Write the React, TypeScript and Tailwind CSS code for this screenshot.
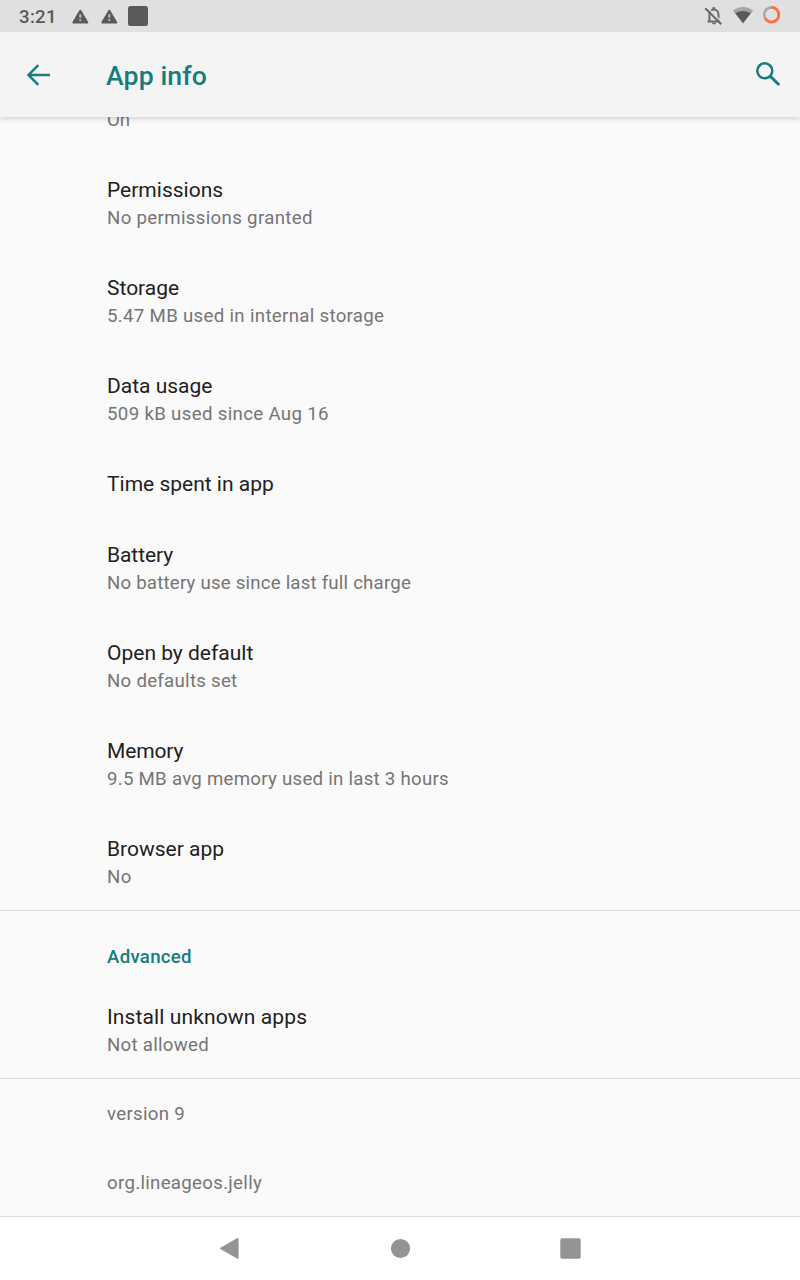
import React from "react";

type Item = { title?: string; summary?: string; tracking?: string; titleTracking?: string };

const items: Item[] = [
  { title: "Permissions", summary: "No permissions granted", tracking: "tracking-[0.33px]" },
  { title: "Storage", summary: "5.47 MB used in internal storage", tracking: "tracking-[0.31px]" },
  { title: "Data usage", summary: "509 kB used since Aug 16", tracking: "tracking-[0.33px]" },
  { title: "Time spent in app" },
  { title: "Battery", summary: "No battery use since last full charge", tracking: "tracking-[0.2px]", titleTracking: "tracking-[-0.08px]" },
  { title: "Open by default", summary: "No defaults set", tracking: "tracking-[0.27px]" },
  { title: "Memory", summary: "9.5 MB avg memory used in last 3 hours", tracking: "tracking-[0.26px]", titleTracking: "tracking-[-0.15px]" },
  { title: "Browser app", summary: "No", tracking: "tracking-[0.5px]" },
];

function Row({ title, summary, tracking = "", titleTracking = "" }: Item) {
  return (
    <li className="pt-[21px] pb-[22px] pl-[107px]">
      <div className={`text-[21px] leading-[28px] text-[#212121] ${titleTracking}`}>{title}</div>
      {summary && (
        <div className={`-mb-[2px] text-[18.67px] leading-[29px] text-[#757575] ${tracking}`}>{summary}</div>
      )}
    </li>
  );
}

function Warning() {
  return (
    <svg className="h-[16px] w-[18px]" viewBox="0 0 18 16" fill="#5a5a5a">
      <path d="M9.3 1.8 L16.3 13.6 H2.3 Z" stroke="#5a5a5a" strokeWidth="2" strokeLinejoin="round" />
      <path d="M8.3 5.2h2v3.6h-2zM8.3 10.2h2v1.8h-2z" fill="#bdbdbd" />
    </svg>
  );
}

function StatusBar() {
  return (
    <header className="flex h-[32px] shrink-0 items-center bg-[#e0e0e0] pl-[19px] text-[#5a5a5a]">
      <span className="w-[52px] pt-[1px] text-[18.67px] leading-[32px] font-medium tracking-[0.3px]">3:21</span>
      <span className="flex gap-[11px] pt-[1px]">
        <Warning />
        <Warning />
      </span>
      <span className="ml-[10px] size-[20px] rounded-[2.5px] bg-[#5a5a5a]" />
      <svg className="ml-auto h-[32px] w-[100px]" viewBox="700 0 100 32" fill="none">
        <path d="M707.5 21.4h13M709.4 21V14.7c0-3 2-5.2 4.5-5.2s4.6 2.2 4.6 5.2V21" stroke="#6a6a6a" strokeWidth="2" />
        <path d="M712.4 9.4V7.2h2.8v2.2z" fill="#6a6a6a" />
        <path d="M712 22.6h4a2 2 0 0 1-4 0z" fill="#6a6a6a" />
        <path d="M706.7 7 L722.7 23" stroke="#e0e0e0" strokeWidth="1.4" />
        <path d="M705.3 8.3 L721.3 24.3" stroke="#6a6a6a" strokeWidth="2" />
        <path d="M732.8 10.4Q743 3.2 753.2 10.4L743 23.2Z" fill="#a6a6a6" />
        <path d="M735.2 13.3Q743 8.6 750.8 13.3L743 23.2Z" fill="#5a5a5a" />
        <circle cx="771.5" cy="14.7" r="7.3" stroke="#a8a8a8" strokeWidth="2.6" />
        <path d="M771.5 7.4A7.3 7.3 0 1 1 765.1 18.2" stroke="#ff7043" strokeWidth="2.8" />
      </svg>
    </header>
  );
}

export default function App() {
  return (
    <div className="flex h-[1280px] w-[800px] flex-col overflow-hidden bg-[#fafafa] font-[Roboto,sans-serif]">
      <StatusBar />
      <div className="z-10 flex h-[85px] shrink-0 items-center bg-[#f4f4f4] pr-[16px] pl-[23px] text-[#167c80] shadow-[0_2px_5px_rgba(0,0,0,0.16)] [clip-path:inset(0_0_-12px_0)]">
        <svg className="h-[32px] w-[83px]" viewBox="0 0 83 32" fill="none" stroke="#167c80" strokeWidth="2.4">
          <path d="M27 16H6M15.3 6.2L5.5 16l9.8 9.8" />
        </svg>
        <h1 className="pt-[2px] text-[26.67px] leading-[32px] font-medium tracking-[0.1px]">App info</h1>
        <svg className="ml-auto h-[32px] w-[32px]" viewBox="0 0 32 32" fill="none" stroke="#167c80">
          <circle cx="12.8" cy="11.8" r="7.5" strokeWidth="2.5" />
          <path d="M18.3 17.3L27.2 26" strokeWidth="3" />
        </svg>
      </div>
      <main className="min-h-0 flex-1 overflow-hidden">
        <div className="-mt-[11px] pb-[20px] pl-[107px] text-[18.67px] leading-[29px] text-[#757575]">On</div>
        <ul className="-mb-[2px]">
          {items.map((item) => (
            <Row key={item.title} {...item} />
          ))}
        </ul>
        <section className="border-t border-[#dadada]">
          <h2 className="pt-[33px] pb-[11px] pl-[107px] text-[18.67px] leading-[27px] font-medium tracking-[0.27px] text-[#167c80]">
            Advanced
          </h2>
          <ul className="-mb-[2px]">
            <Row
              title="Install unknown apps"
              summary="Not allowed"
              tracking="tracking-[0.27px]"
              titleTracking="tracking-[0.12px]"
            />
          </ul>
        </section>
        <section className="border-t border-[#dadada] pl-[107px] text-[18.67px] leading-[27px] tracking-[0.3px] text-[#757575]">
          <p className="pt-[22px] pb-[20px]">version 9</p>
          <p className="pt-[22px]">org.lineageos.jelly</p>
        </section>
      </main>
      <nav className="flex h-[64px] shrink-0 items-center border-t border-[#dadada] bg-white">
        <svg className="h-[63px] w-[800px]" viewBox="0 1217 800 63" fill="#949494">
          <path d="M220.8 1248.4L237.8 1238.8V1258Z" stroke="#949494" strokeWidth="1.6" strokeLinejoin="round" />
          <circle cx="400.5" cy="1248.5" r="9.6" />
          <rect x="560.3" y="1238.3" width="20.4" height="20.4" rx="1.8" />
        </svg>
      </nav>
    </div>
  );
}
